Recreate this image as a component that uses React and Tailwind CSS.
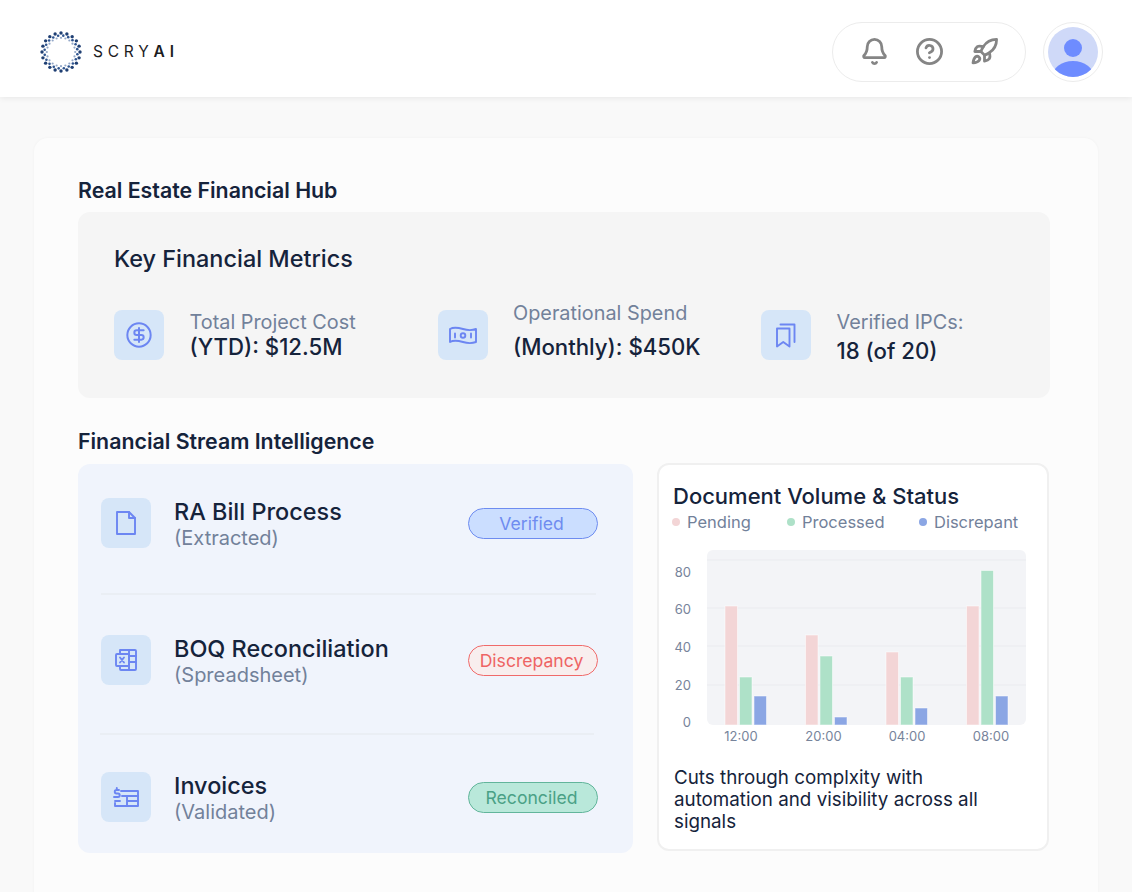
import React from 'react'
import { Bell, CircleHelp, Rocket, CircleDollarSign } from 'lucide-react'

const rows = [
  { title: 'RA Bill Process', sub: '(Extracted)', status: 'Verified', pill: 'bg-[#cbdeff] border-[#6e8cf0] text-[#6f8cf0]', icon: 'file' },
  { title: 'BOQ Reconciliation', sub: '(Spreadsheet)', status: 'Discrepancy', pill: 'bg-[#f8eeee] border-[#f06a6a] text-[#ee6464]', icon: 'sheet' },
  { title: 'Invoices', sub: '(Validated)', status: 'Reconciled', pill: 'bg-[#b9e8da] border-[#62b59b] text-[#4aa186]', icon: 'invoice' },
]

const bars = [
  [725, 606, '#f3d5d6'], [739.5, 677, '#aee1c8'], [754, 696, '#8ba6e4'],
  [805.5, 635, '#f3d5d6'], [820, 656, '#aee1c8'], [834.5, 717, '#8ba6e4'],
  [886, 652, '#f3d5d6'], [900.5, 677, '#aee1c8'], [915, 708, '#8ba6e4'],
  [966.5, 606, '#f3d5d6'], [981, 570.5, '#aee1c8'], [995.5, 696, '#8ba6e4'],
]

function Logo() {
  const marks = []
  for (let i = 0; i < 20; i++) {
    const a = (i / 20) * Math.PI * 2
    const b = a + 0.14
    marks.push(<circle key={'o' + i} cx={21 + Math.cos(a) * 19} cy={21 + Math.sin(a) * 19} r="1.7" fill="#1f3f73" />)
    marks.push(<circle key={'m' + i} cx={21 + Math.cos(b) * 16.5} cy={21 + Math.sin(b) * 16.5} r="1.3" fill="#2f5590" />)
    marks.push(<circle key={'i' + i} cx={21 + Math.cos(a) * 14.2} cy={21 + Math.sin(a) * 14.2} r="1.1" fill="#93a8c8" />)
  }
  return <svg width="42" height="42" viewBox="0 0 42 42">{marks}</svg>
}

function TileIcon({ name }) {
  const common = { fill: 'none', stroke: '#6c86f2', strokeWidth: 1.9, strokeLinejoin: 'round', strokeLinecap: 'round' }
  if (name === 'dollar') return <CircleDollarSign size={28} color="#6c86f2" strokeWidth={1.7} />
  if (name === 'money') return (
    <svg width="28" height="19" viewBox="0 0 28 19" {...common}>
      <path d="M1 3c4-2.500 8-1.500 13 0s9 1.500 13 0v13c-4 1.500-8 1.500-13 0s-9-2.500-13 0z" />
      <circle cx="14" cy="9.500" r="2.300" />
      <path d="M6 7.500v4M22 7.500v4" />
    </svg>
  )
  if (name === 'bookmarks') return (
    <svg width="20" height="25" viewBox="0 0 20 25" {...common}>
      <path d="M1 5.500h12.500V23.500l-6.250-4.500L1 23.500z" />
      <path d="M4.500 1.500h14V19" />
    </svg>
  )
  if (name === 'file') return (
    <svg width="20" height="24" viewBox="0 0 20 24" {...common}>
      <path d="M1 1h12l6 6v16H1z" />
      <path d="M13 1v6h6" />
    </svg>
  )
  if (name === 'sheet') return (
    <svg width="22" height="24" viewBox="0 0 22 24" {...common}>
      <path d="M5 6V2h15a1 1 0 0 1 1 1v18a1 1 0 0 1-1 1H6a1 1 0 0 1-1-1v-3" />
      <rect x="1" y="6" width="13" height="12" rx="1" />
      <path d="M14 2v20M14 8h7M14 14h7M5 9.500l4 5M9 9.500l-4 5" />
    </svg>
  )
  return (
    <svg width="26" height="20" viewBox="0 0 26 20" {...common}>
      <path d="M8 4h17v15H2v-3" />
      <path d="M9 9h16M14 9v10M14 14h11M2 14h5" />
      <path d="M6 3H3.500a1.500 1.500 0 0 0 0 3.500h1.500a1.500 1.500 0 0 1 0 3.500H1M3.800 1v1.800" />
    </svg>
  )
}

function Tile({ name }) {
  return (
    <div className="flex h-[50px] w-[50px] shrink-0 items-center justify-center rounded-[8px] bg-[#d6e6f8]">
      <TileIcon name={name} />
    </div>
  )
}

function Metric({ icon, label, value, labelClass, valueClass }) {
  return (
    <div className="flex items-start gap-[25.5px]">
      <Tile name={icon} />
      <div>
        <div className={'text-[19.85px] leading-[28px] text-[#72819a] ' + labelClass}>{label}</div>
        <div className={'text-[22.2px] font-[450] leading-[28px] text-[#15233b] ' + valueClass}>{value}</div>
      </div>
    </div>
  )
}

function Chart() {
  return (
    <svg width="370" height="205" viewBox="670 545 370 205" className="block" style={{ fontFamily: 'Inter, sans-serif' }}>
      <rect x="707" y="550" width="319" height="175" rx="6" fill="#f3f4f7" />
      {[560, 608, 646, 685].map((y) => (
        <line key={y} x1="707" x2="1026" y1={y} y2={y} stroke="#eaebef" strokeWidth="1" />
      ))}
      {bars.map(([x, y, c]) => (
        <rect key={x} x={x} y={y} width="12.500" height={725 - y} fill={c} stroke="#ffffff" strokeOpacity="0.5" strokeWidth="1" />
      ))}
      {[['80', 572], ['60', 609], ['40', 647], ['20', 685], ['0', 722]].map(([t, y]) => (
        <text key={t} x="691" y={y + 4.500} textAnchor="end" fontSize="13" fill="#77849b">{t}</text>
      ))}
      {[['12:00', 741], ['20:00', 823.500], ['04:00', 907], ['08:00', 991]].map(([t, x]) => (
        <text key={t} x={x} y="741" textAnchor="middle" fontSize="13" fill="#77849b">{t}</text>
      ))}
    </svg>
  )
}

function Legend({ color, label, className }) {
  return (
    <div className={'flex items-center gap-[7px] ' + className}>
      <span className={'h-2 w-2 rounded-full ' + color} />
      <span>{label}</span>
    </div>
  )
}

export default function App() {
  return (
    <div className="h-[892px] overflow-hidden bg-[#f9f9f9] font-['Inter',sans-serif]">
      <header className="flex h-[97px] items-center justify-between bg-white pl-[40px] pr-[29px] pt-[6px] shadow-[0_1px_6px_rgba(0,0,0,0.08)]">
        <div className="flex items-center gap-[11px]">
          <Logo />
          <div className="text-[15.5px] leading-none tracking-[4.8px] text-[#1c1c1f]">
            SCRY<span className="font-semibold">AI</span>
          </div>
        </div>
        <div className="flex items-center gap-[17px]">
          <div className="flex h-[60px] w-[194px] items-center justify-center gap-[26px] rounded-full border border-[#ececec] bg-white text-[#858585]">
            <Bell size={29} strokeWidth={2.3} />
            <CircleHelp size={29} strokeWidth={2.3} />
            <Rocket size={29} strokeWidth={2.3} />
          </div>
          <div className="flex h-[60px] w-[60px] items-center justify-center rounded-full border border-[#ececec] bg-white">
            <svg width="50" height="50" viewBox="0 0 50 50">
              <defs>
                <clipPath id="avatar-clip"><circle cx="25" cy="25" r="25" /></clipPath>
              </defs>
              <circle cx="25" cy="25" r="25" fill="#cfd9f8" />
              <circle cx="25" cy="21" r="9" fill="#6e8cff" />
              <ellipse cx="25" cy="50" rx="21" ry="16" fill="#6e8cff" clipPath="url(#avatar-clip)" />
            </svg>
          </div>
        </div>
      </header>

      <main className="mx-[34px] mt-[41px] rounded-t-[14px] bg-[#fcfcfc] pl-[44px] pr-[48px] pt-[40px] pb-[60px] shadow-[0_0_3px_rgba(0,0,0,0.04)]">
        <h1 className="text-[21.33px] font-semibold leading-[24px] text-[#15233b]">Real Estate Financial Hub</h1>
        <section className="mt-[10px] h-[186px] rounded-[12px] bg-[#f5f5f5] pl-[36px] pt-[31px]">
          <h2 className="text-[23.45px] font-[450] leading-[32px] text-[#15233b]">Key Financial Metrics</h2>
          <div className="mt-[35px] grid grid-cols-[323.5px_323.5px_1fr]">
            <Metric icon="dollar" label="Total Project Cost" value="(YTD): $12.5M" labelClass="-mt-[2px]" valueClass="-mt-[3px]" />
            <Metric icon="money" label="Operational Spend" value="(Monthly): $450K" labelClass="-mt-[11px]" valueClass="mt-[6px]" />
            <Metric icon="bookmarks" label="Verified IPCs:" value="18 (of 20)" labelClass="-mt-[2px]" valueClass="mt-px" />
          </div>
        </section>

        <h2 className="mt-[31px] text-[21.33px] font-semibold leading-[24px] text-[#15233b]">Financial Stream Intelligence</h2>
        <div className="mt-[11px] flex items-start gap-[24px]">
          <div className="h-[389px] w-[555px] rounded-[12px] bg-[#f0f4fc] pl-[23px] pr-[35px] pt-[34px]">
            {rows.map((row, i) => (
              <div key={row.title}>
                {i > 0 && (
                  <div className={i === 1 ? 'mb-[40px] mt-[45px] h-[2px] w-[495px] bg-[#eaeef4]' : '-ml-px mb-[37px] mt-[48px] h-[2px] w-[494px] bg-[#eaeef4]'} />
                )}
                <div className="flex h-[50px] items-start">
                  <Tile name={row.icon} />
                  <div className="ml-[23px] flex-1">
                    <div className="-mt-px text-[23.45px] font-[450] leading-[30px] text-[#15233b]">{row.title}</div>
                    <div className="-mt-[2px] text-[20px] leading-[26px] text-[#72819a]">{row.sub}</div>
                  </div>
                  <div className={'mt-[10px] flex h-[31px] w-[130px] items-center justify-center rounded-full border pr-[3px] pt-px text-[17.6px] ' + row.pill}>
                    {row.status}
                  </div>
                </div>
              </div>
            ))}
          </div>

          <div className="-mt-px h-[388px] w-[392px] rounded-[12px] border-2 border-[#f0f0f0] bg-white pl-[14px] pt-[17px]">
            <div className="text-[22px] font-medium leading-[28px] text-[#15233b]">Document Volume &amp; Status</div>
            <div className="-ml-px flex text-[16.5px] leading-[24px] text-[#72819a]">
              <Legend color="bg-[#f3d5d6]" label="Pending" className="w-[115px]" />
              <Legend color="bg-[#aee1c8]" label="Processed" className="w-[132px]" />
              <Legend color="bg-[#8ba6e4]" label="Discrepant" className="" />
            </div>
            <div className="-ml-[3px] mt-[11px]"><Chart /></div>
            <p className="ml-px mt-[17px] w-[330px] text-[18.8px] leading-[22px] text-[#15233b]">
              Cuts through complxity with automation and visibility across all signals
            </p>
          </div>
        </div>
      </main>
    </div>
  )
}
